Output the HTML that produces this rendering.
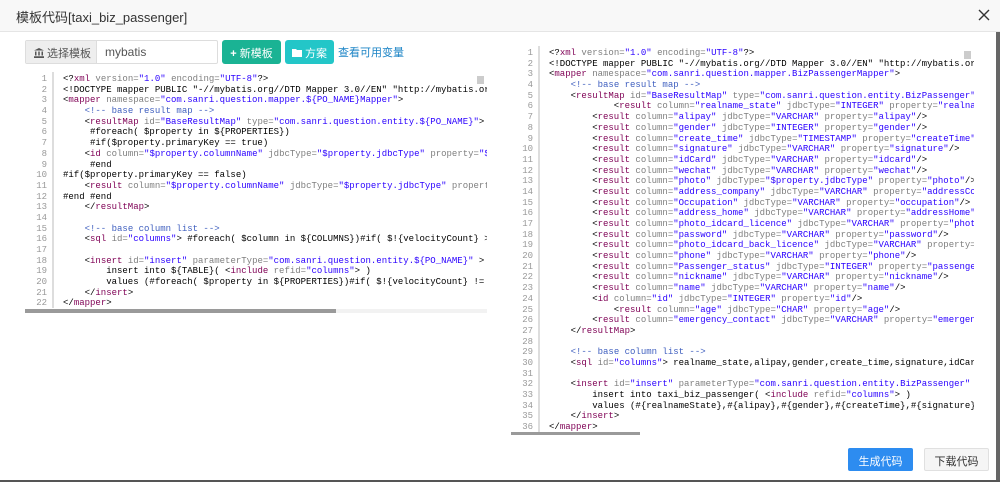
<!DOCTYPE html>
<html><head><meta charset="utf-8">
<style>
*{margin:0;padding:0;box-sizing:border-box}
body{width:1000px;height:482px;overflow:hidden;background:#fff;font-family:"Liberation Sans","Noto Sans CJK SC",sans-serif;position:relative}
.title{position:absolute;left:0;top:0;width:1000px;height:32px;background:#f8f8f8;border-bottom:1px solid #e5e5e5;font-size:13px;color:#333;padding:7px 0 0 16px;white-space:nowrap}
.close{position:absolute;left:978px;top:9px}
.grp{position:absolute;left:25px;top:40px;height:24px;width:193px;border:1px solid #ddd;border-radius:2px;font-size:11px;white-space:nowrap}
.addon{position:absolute;left:0;top:0;width:71px;height:22px;background:#eee;border-right:1px solid #ddd;color:#555;padding:4px 0 0 8px}
.inp{position:absolute;left:79px;top:4px;color:#555;font-size:12px}
.btn{position:absolute;top:40px;height:24px;color:#fff;font-size:11px;border-radius:3px;padding:5px 0 0 0;text-align:center;white-space:nowrap}
.link{position:absolute;left:338px;top:44px;font-size:11px;color:#1c84c6;white-space:nowrap}
.ed{position:absolute;overflow:hidden;background:#fff}
.gut{position:absolute;left:0;top:0;bottom:0;border-right:2px solid #ddd;background:#fff}
pre{position:absolute;font-family:"Liberation Mono",monospace;font-size:9px;line-height:10.68px;white-space:pre;color:#000}
.ln{color:#999;text-align:right}
.t{color:#7f0055}
.a{color:#7f7f7f}
.s{color:#2a00ff}
.c{color:#3f5fbf}
.sb{position:absolute;height:4px;background:#f2f2f2}
.sbt{position:absolute;left:0;top:0;height:4px;background:#9a9a9a}
.mk{position:absolute;width:7px;height:8px;background:#ccc}
</style></head><body>
<div class="title">模板代码[taxi_biz_passenger]</div>
<svg class="close" width="12" height="12" viewBox="0 0 12 12"><path d="M1 1L11 11M11 1L1 11" stroke="#333" stroke-width="1.4"/></svg>
<div class="grp"><div class="addon"><svg width="10" height="10" viewBox="0 0 10 10" style="vertical-align:-1px"><path d="M5 0L10 2.5H0Z M1 3.5h1.5v4H1z M4.25 3.5h1.5v4h-1.5z M7.5 3.5H9v4H7.5z M0 8.3h10V10H0z" fill="#555"/></svg> 选择模板</div><div class="inp">mybatis</div></div>
<div class="btn" style="left:222px;width:59px;background:#1ab394"><b>+</b> 新模板</div>
<div class="btn" style="left:285px;width:49px;background:#23c6c8"><svg width="10" height="8" viewBox="0 0 10 8" style="vertical-align:0"><path d="M0 0h4l1 1h5v7H0z" fill="#fff"/></svg> 方案</div>
<div class="link">查看可用变量</div>

<div class="ed" style="left:25px;top:72px;width:462px;height:236px">
<div class="gut" style="width:29px"></div>
<pre class="ln" style="left:0;top:2px;width:22px">1
2
3
4
5
6
7
8
9
10
11
12
13
14
15
16
17
18
19
20
21
22</pre>
<pre style="left:38px;top:2px">&lt;?<span class="t">xml</span> <span class="a">version=</span><span class="s">"1.0"</span> <span class="a">encoding=</span><span class="s">"UTF-8"</span>?&gt;
&lt;!DOCTYPE mapper PUBLIC "-//mybatis.org//DTD Mapper 3.0//EN" "http://mybatis.org/dtd/mybatis-3-mapper.dtd"&gt;
&lt;<span class="t">mapper</span> <span class="a">namespace=</span><span class="s">"com.sanri.question.mapper.${PO_NAME}Mapper"</span>&gt;
    <span class="c">&lt;!-- base result map --&gt;</span>
    &lt;<span class="t">resultMap</span> <span class="a">id=</span><span class="s">"BaseResultMap"</span> <span class="a">type=</span><span class="s">"com.sanri.question.entity.${PO_NAME}"</span>&gt;
     #foreach( $property in ${PROPERTIES})
     #if($property.primaryKey == true)
    &lt;<span class="t">id</span> <span class="a">column=</span><span class="s">"$property.columnName"</span> <span class="a">jdbcType=</span><span class="s">"$property.jdbcType"</span> <span class="a">property=</span><span class="s">"$property.name"</span>/&gt;
     #end
#if($property.primaryKey == false)
    &lt;<span class="t">result</span> <span class="a">column=</span><span class="s">"$property.columnName"</span> <span class="a">jdbcType=</span><span class="s">"$property.jdbcType"</span> <span class="a">property=</span><span class="s">"$property.name"</span>/&gt;
#end #end
    &lt;/<span class="t">resultMap</span>&gt;

    <span class="c">&lt;!-- base column list --&gt;</span>
    &lt;<span class="t">sql</span> <span class="a">id=</span><span class="s">"columns"</span>&gt; #foreach( $column in ${COLUMNS})#if( $!{velocityCount} &gt; 1),#end$column#end &lt;/sql&gt;

    &lt;<span class="t">insert</span> <span class="a">id=</span><span class="s">"insert"</span> <span class="a">parameterType=</span><span class="s">"com.sanri.question.entity.${PO_NAME}"</span> &gt;
        insert into ${TABLE}( &lt;<span class="t">include</span> <span class="a">refid=</span><span class="s">"columns"</span>&gt; )
        values (#foreach( $property in ${PROPERTIES})#if( $!{velocityCount} != 1),#end)
    &lt;/<span class="t">insert</span>&gt;
&lt;/<span class="t">mapper</span>&gt;</pre>
<div class="mk" style="left:452px;top:4px"></div>
</div>
<div class="sb" style="left:25px;top:309px;width:462px"><div class="sbt" style="width:311px"></div></div>

<div class="ed" style="left:511px;top:46px;width:463px;height:386px">
<div class="gut" style="width:29px"></div>
<pre class="ln" style="left:0;top:2px;width:22px">1
2
3
4
5
6
7
8
9
10
11
12
13
14
15
16
17
18
19
20
21
22
23
24
25
26
27
28
29
30
31
32
33
34
35
36</pre>
<pre style="left:38px;top:2px">&lt;?<span class="t">xml</span> <span class="a">version=</span><span class="s">"1.0"</span> <span class="a">encoding=</span><span class="s">"UTF-8"</span>?&gt;
&lt;!DOCTYPE mapper PUBLIC "-//mybatis.org//DTD Mapper 3.0//EN" "http://mybatis.org/dtd/mybatis-3-mapper.dtd"&gt;
&lt;<span class="t">mapper</span> <span class="a">namespace=</span><span class="s">"com.sanri.question.mapper.BizPassengerMapper"</span>&gt;
    <span class="c">&lt;!-- base result map --&gt;</span>
    &lt;<span class="t">resultMap</span> <span class="a">id=</span><span class="s">"BaseResultMap"</span> <span class="a">type=</span><span class="s">"com.sanri.question.entity.BizPassenger"</span>&gt;
            &lt;<span class="t">result</span> <span class="a">column=</span><span class="s">"realname_state"</span> <span class="a">jdbcType=</span><span class="s">"INTEGER"</span> <span class="a">property=</span><span class="s">"realnameState"</span>/&gt;
        &lt;<span class="t">result</span> <span class="a">column=</span><span class="s">"alipay"</span> <span class="a">jdbcType=</span><span class="s">"VARCHAR"</span> <span class="a">property=</span><span class="s">"alipay"</span>/&gt;
        &lt;<span class="t">result</span> <span class="a">column=</span><span class="s">"gender"</span> <span class="a">jdbcType=</span><span class="s">"INTEGER"</span> <span class="a">property=</span><span class="s">"gender"</span>/&gt;
        &lt;<span class="t">result</span> <span class="a">column=</span><span class="s">"create_time"</span> <span class="a">jdbcType=</span><span class="s">"TIMESTAMP"</span> <span class="a">property=</span><span class="s">"createTime"</span>/&gt;
        &lt;<span class="t">result</span> <span class="a">column=</span><span class="s">"signature"</span> <span class="a">jdbcType=</span><span class="s">"VARCHAR"</span> <span class="a">property=</span><span class="s">"signature"</span>/&gt;
        &lt;<span class="t">result</span> <span class="a">column=</span><span class="s">"idCard"</span> <span class="a">jdbcType=</span><span class="s">"VARCHAR"</span> <span class="a">property=</span><span class="s">"idcard"</span>/&gt;
        &lt;<span class="t">result</span> <span class="a">column=</span><span class="s">"wechat"</span> <span class="a">jdbcType=</span><span class="s">"VARCHAR"</span> <span class="a">property=</span><span class="s">"wechat"</span>/&gt;
        &lt;<span class="t">result</span> <span class="a">column=</span><span class="s">"photo"</span> <span class="a">jdbcType=</span><span class="s">"$property.jdbcType"</span> <span class="a">property=</span><span class="s">"photo"</span>/&gt;
        &lt;<span class="t">result</span> <span class="a">column=</span><span class="s">"address_company"</span> <span class="a">jdbcType=</span><span class="s">"VARCHAR"</span> <span class="a">property=</span><span class="s">"addressCompany"</span>/&gt;
        &lt;<span class="t">result</span> <span class="a">column=</span><span class="s">"Occupation"</span> <span class="a">jdbcType=</span><span class="s">"VARCHAR"</span> <span class="a">property=</span><span class="s">"occupation"</span>/&gt;
        &lt;<span class="t">result</span> <span class="a">column=</span><span class="s">"address_home"</span> <span class="a">jdbcType=</span><span class="s">"VARCHAR"</span> <span class="a">property=</span><span class="s">"addressHome"</span>/&gt;
        &lt;<span class="t">result</span> <span class="a">column=</span><span class="s">"photo_idcard_licence"</span> <span class="a">jdbcType=</span><span class="s">"VARCHAR"</span> <span class="a">property=</span><span class="s">"photoIdcardLicence"</span>/&gt;
        &lt;<span class="t">result</span> <span class="a">column=</span><span class="s">"password"</span> <span class="a">jdbcType=</span><span class="s">"VARCHAR"</span> <span class="a">property=</span><span class="s">"password"</span>/&gt;
        &lt;<span class="t">result</span> <span class="a">column=</span><span class="s">"photo_idcard_back_licence"</span> <span class="a">jdbcType=</span><span class="s">"VARCHAR"</span> <span class="a">property=</span><span class="s">"photoIdcardBackLicence"</span>/&gt;
        &lt;<span class="t">result</span> <span class="a">column=</span><span class="s">"phone"</span> <span class="a">jdbcType=</span><span class="s">"VARCHAR"</span> <span class="a">property=</span><span class="s">"phone"</span>/&gt;
        &lt;<span class="t">result</span> <span class="a">column=</span><span class="s">"Passenger_status"</span> <span class="a">jdbcType=</span><span class="s">"INTEGER"</span> <span class="a">property=</span><span class="s">"passengerStatus"</span>/&gt;
        &lt;<span class="t">result</span> <span class="a">column=</span><span class="s">"nickname"</span> <span class="a">jdbcType=</span><span class="s">"VARCHAR"</span> <span class="a">property=</span><span class="s">"nickname"</span>/&gt;
        &lt;<span class="t">result</span> <span class="a">column=</span><span class="s">"name"</span> <span class="a">jdbcType=</span><span class="s">"VARCHAR"</span> <span class="a">property=</span><span class="s">"name"</span>/&gt;
        &lt;<span class="t">id</span> <span class="a">column=</span><span class="s">"id"</span> <span class="a">jdbcType=</span><span class="s">"INTEGER"</span> <span class="a">property=</span><span class="s">"id"</span>/&gt;
            &lt;<span class="t">result</span> <span class="a">column=</span><span class="s">"age"</span> <span class="a">jdbcType=</span><span class="s">"CHAR"</span> <span class="a">property=</span><span class="s">"age"</span>/&gt;
        &lt;<span class="t">result</span> <span class="a">column=</span><span class="s">"emergency_contact"</span> <span class="a">jdbcType=</span><span class="s">"VARCHAR"</span> <span class="a">property=</span><span class="s">"emergencyContact"</span>/&gt;
    &lt;/<span class="t">resultMap</span>&gt;

    <span class="c">&lt;!-- base column list --&gt;</span>
    &lt;<span class="t">sql</span> <span class="a">id=</span><span class="s">"columns"</span>&gt; realname_state,alipay,gender,create_time,signature,idCard,wechat,photo &lt;/sql&gt;

    &lt;<span class="t">insert</span> <span class="a">id=</span><span class="s">"insert"</span> <span class="a">parameterType=</span><span class="s">"com.sanri.question.entity.BizPassenger"</span> &gt;
        insert into taxi_biz_passenger( &lt;<span class="t">include</span> <span class="a">refid=</span><span class="s">"columns"</span>&gt; )
        values (#{realnameState},#{alipay},#{gender},#{createTime},#{signature},#{idCard})
    &lt;/<span class="t">insert</span>&gt;
&lt;/<span class="t">mapper</span>&gt;</pre>
<div class="mk" style="left:453px;top:5px"></div>
</div>
<div class="sb" style="left:511px;top:432px;width:463px;background:#fff"><div class="sbt" style="width:129px;height:3px"></div></div>

<div class="btn" style="left:848px;top:448px;width:65px;height:23px;background:#2d8cf0;border-radius:2px;padding-top:5px">生成代码</div>
<div class="btn" style="left:924px;top:448px;width:65px;height:23px;background:#f5f5f5;border:1px solid #e0e0e0;color:#333;border-radius:2px;padding-top:4px">下载代码</div>
<div style="position:absolute;left:996px;top:32px;width:4px;height:450px;background:#666"></div>
<div style="position:absolute;left:0;top:480px;width:1000px;height:2px;background:#555"></div>
</body></html>
